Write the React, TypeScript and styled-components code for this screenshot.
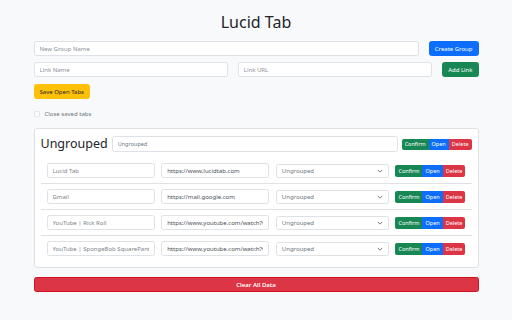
import styled, { createGlobalStyle } from "styled-components";

const GlobalStyle = createGlobalStyle`
  body {
    margin: 0;
    background: #f8f9fa;
    font-family: "Noto Sans", "Open Sans", sans-serif;
    color: #212529;
  }
  * { box-sizing: border-box; }
`;

const colors = {
  primary: "#0d6efd",
  success: "#198754",
  warning: "#ffc107",
  danger: "#dc3545",
};

type Variant = keyof typeof colors;

const Page = styled.div`
  padding-top: 12px;
`;
const Title = styled.h1`
  margin: 0 0 9px;
  font-size: 16px;
  line-height: 20px;
  font-weight: 400;
  text-align: center;
`;
const Container = styled.div`
  width: 445px;
  margin: 0 auto;
  display: flex;
  flex-direction: column;
`;
const FormRow = styled.div<{ $mb?: number }>`
  display: flex;
  gap: 10px;
  margin-bottom: ${props => props.$mb ?? 6}px;
`;
const Input = styled.input<{ $dark?: boolean }>`
  flex: 1;
  min-width: 0;
  height: 15px;
  padding: 0 5px;
  border: 1px solid #dee2e6;
  border-radius: 2.5px;
  background: #fff;
  font-family: inherit;
  font-size: 6px;
  color: ${props => (props.$dark ? "#495057" : "#7b8289")};
  outline: none;
  &::placeholder {
    color: #8a9197;
  }
`;
const Button = styled.button<{ $variant: Variant; $full?: boolean }>`
  height: 15px;
  padding: 0 5px;
  border: 1px solid ${props => colors[props.$variant]};
  border-radius: 2.5px;
  background: ${props => colors[props.$variant]};
  color: ${props => (props.$variant === "warning" ? "#212529" : "#fff")};
  font-family: inherit;
  font-size: 6px;
  white-space: nowrap;
  align-self: ${props => (props.$full ? "stretch" : "flex-start")};
  ${props => props.$full && "border-color: #d3101f; font-weight: 600;"}
`;
const CheckRow = styled.label`
  display: flex;
  align-items: center;
  gap: 5px;
  margin: 11px 0 10px;
  font-size: 6px;
  color: #6c757d;
`;
const Check = styled.span`
  width: 6px;
  height: 6px;
  border: 1px solid #dee2e6;
  border-radius: 1.5px;
  background: #fff;
`;
const Card = styled.section`
  background: #fff;
  border: 1px solid #dee2e6;
  border-radius: 3px;
  padding: 6px;
  margin-bottom: 9px;
`;
const CardHeader = styled.div`
  display: flex;
  align-items: center;
  gap: 4px;
  height: 18px;
  margin-bottom: 5px;
`;
const GroupTitle = styled.h2`
  margin: 0;
  font-size: 12.5px;
  font-weight: 400;
  line-height: 16px;
`;
const GroupInput = styled(Input)`
  height: 16px;
  color: #6c757d;
  font-size: 5.5px;
`;
const BtnGroup = styled.div<{ $h: number }>`
  display: flex;
  height: ${props => props.$h}px;
  border-radius: 2px;
  overflow: hidden;
`;
const GroupBtn = styled.button<{ $variant: Variant }>`
  border: 0;
  padding: 0 3px;
  background: ${props => colors[props.$variant]};
  color: #fff;
  font-family: inherit;
  font-size: 5.5px;
  flex: ${props => (props.$variant === "success" ? 1.25 : 1)};
`;
const LinkRow = styled.div`
  display: grid;
  grid-template-columns: 108px 108px 113px 70px;
  justify-content: space-between;
  align-items: center;
  padding: 5px 6px;
  & + & {
    border-top: 1px solid #dee2e6;
  }
`;
const Select = styled.div`
  height: 14px;
  display: flex;
  align-items: center;
  justify-content: space-between;
  padding: 0 5px;
  border: 1px solid #dee2e6;
  border-radius: 2.5px;
  font-size: 6px;
  color: #6c757d;
`;

const links = [
  { name: "Lucid Tab", url: "https://www.lucidtab.com" },
  { name: "Gmail", url: "https://mail.google.com" },
  { name: "YouTube | Rick Roll", url: "https://www.youtube.com/watch?v=dQw4w9WgXcQ" },
  { name: "YouTube | SpongeBob SquarePants", url: "https://www.youtube.com/watch?v=abc" },
];

function Actions({ h }: { h: number }) {
  return (
    <BtnGroup $h={h}>
      <GroupBtn $variant="success">Confirm</GroupBtn>
      <GroupBtn $variant="primary">Open</GroupBtn>
      <GroupBtn $variant="danger">Delete</GroupBtn>
    </BtnGroup>
  );
}

export default function App() {
  return (
    <Page>
      <GlobalStyle />
      <Title>Lucid Tab</Title>
      <Container>
        <FormRow>
          <Input placeholder="New Group Name" />
          <Button $variant="primary">Create Group</Button>
        </FormRow>
        <FormRow $mb={7}>
          <Input placeholder="Link Name" />
          <Input placeholder="Link URL" />
          <Button $variant="success">Add Link</Button>
        </FormRow>
        <Button $variant="warning">Save Open Tabs</Button>
        <CheckRow>
          <Check />
          Close saved tabs
        </CheckRow>
        <Card>
          <CardHeader>
            <GroupTitle>Ungrouped</GroupTitle>
            <GroupInput defaultValue="Ungrouped" />
            <Actions h={11} />
          </CardHeader>
          {links.map(link => (
            <LinkRow key={link.name}>
              <Input defaultValue={link.name} />
              <Input $dark defaultValue={link.url} />
              <Select>
                Ungrouped
                <svg width="6" height="6" viewBox="0 0 16 16">
                  <path d="M2 5l6 6 6-6" fill="none" stroke="#495057" strokeWidth="2" />
                </svg>
              </Select>
              <Actions h={12} />
            </LinkRow>
          ))}
        </Card>
        <Button $variant="danger" $full>Clear All Data</Button>
      </Container>
    </Page>
  );
}
